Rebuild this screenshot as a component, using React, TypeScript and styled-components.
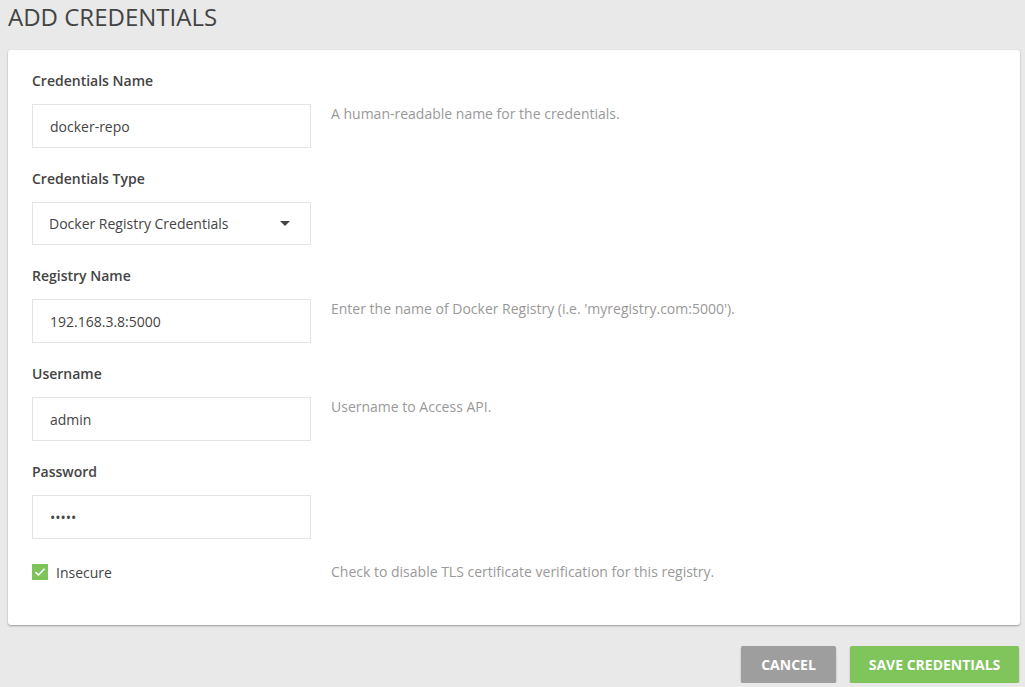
import React from 'react';
import styled, { createGlobalStyle } from 'styled-components';

const GlobalStyle = createGlobalStyle`
    html, body {
        margin: 0;
        padding: 0;
        background: #e9e9e9;
        font-family: "Open Sans", "Noto Sans", Arial, sans-serif;
        color: #444;
    }
    * {
        box-sizing: border-box;
    }
`;

const Page = styled.div`
    padding: 0 5px 0 8px;
`;

const Title = styled.h1`
    margin: 0;
    padding-top: 2px;
    height: 50px;
    font-size: 24px;
    font-weight: 400;
    line-height: 30px;
    text-transform: uppercase;
    color: #444;
`;

const Card = styled.div`
    background: #fff;
    border-radius: 3px;
    box-shadow: 0 1px 2px rgba(0, 0, 0, 0.35);
    padding: 21px 24px 41px 24px;
`;

const Field = styled.div`
    margin-bottom: 21px;
`;

const Label = styled.div`
    font-size: 14px;
    font-weight: 600;
    line-height: 20px;
    margin-bottom: 13px;
    color: #444;
`;

const Row = styled.div`
    display: grid;
    grid-template-columns: 279px 1fr;
    column-gap: 20px;
    align-items: start;
`;

const Input = styled.input`
    width: 279px;
    height: 44px;
    border: 1px solid #e4e4e4;
    border-radius: 0;
    padding: 0 17px;
    font-family: inherit;
    font-size: 14px;
    color: #444;
    background: #fff;
    outline: none;
`;

const SelectBox = styled.div`
    width: 279px;
    height: 43px;
    border: 1px solid #e4e4e4;
    padding: 0 20px 0 16px;
    display: flex;
    align-items: center;
    justify-content: space-between;
    font-size: 14px;
    color: #444;
`;

const Caret = styled.span`
    width: 0;
    height: 0;
    border-left: 5px solid transparent;
    border-right: 5px solid transparent;
    border-top: 5px solid #444;
`;

const Help = styled.div`
    font-size: 14px;
    line-height: 20px;
    color: #999;
`;

const CheckRow = styled.div`
    display: grid;
    grid-template-columns: 279px 1fr;
    column-gap: 20px;
    align-items: center;
    height: 24px;
`;

const CheckLabel = styled.label`
    display: flex;
    align-items: center;
    gap: 8px;
    font-size: 14px;
    color: #444;
`;

const Box = styled.span`
    width: 16px;
    height: 16px;
    background: #7ec35b;
    display: flex;
    align-items: center;
    justify-content: center;
`;

const Actions = styled.div`
    display: flex;
    justify-content: flex-end;
    gap: 14px;
    padding-top: 21px;
    padding-right: 1px;
`;

const Button = styled.button<{ $variant: 'cancel' | 'save' }>`
    height: 37px;
    width: ${p => (p.$variant === 'save' ? '169px' : '95px')};
    padding: 0;
    border: none;
    border-radius: 2px;
    font-family: inherit;
    font-size: 14px;
    font-weight: 700;
    text-transform: uppercase;
    color: #fff;
    background: ${p => (p.$variant === 'save' ? '#80c45c' : '#9e9e9e')};
    box-shadow: 0 1px 2px rgba(0, 0, 0, 0.25);
`;

const fields = [
    { label: 'Credentials Name', value: 'docker-repo', help: 'A human-readable name for the credentials.' },
    { label: 'Credentials Type', select: 'Docker Registry Credentials' },
    { label: 'Registry Name', value: '192.168.3.8:5000', help: "Enter the name of Docker Registry (i.e. 'myregistry.com:5000')." },
    { label: 'Username', value: 'admin', help: 'Username to Access API.' },
    { label: 'Password', value: 'admin', password: true },
];

function App() {
    return (
        <Page>
            <GlobalStyle />
            <Title>Add Credentials</Title>
            <Card>
                {fields.map(f => (
                    <Field key={f.label}>
                        <Label>{f.label}</Label>
                        <Row>
                            {f.select ? (
                                <SelectBox>
                                    {f.select}
                                    <Caret />
                                </SelectBox>
                            ) : (
                                <Input
                                    type={f.password ? 'password' : 'text'}
                                    defaultValue={f.value}
                                    readOnly
                                />
                            )}
                            {f.help && <Help>{f.help}</Help>}
                        </Row>
                    </Field>
                ))}
                <CheckRow>
                    <CheckLabel>
                        <Box>
                            <svg width="12" height="10" viewBox="0 0 12 10">
                                <path d="M1.5 5.2 L4.5 8 L10.5 1.8" fill="none" stroke="#fff" strokeWidth="1.6" />
                            </svg>
                        </Box>
                        Insecure
                    </CheckLabel>
                    <Help>Check to disable TLS certificate verification for this registry.</Help>
                </CheckRow>
            </Card>
            <Actions>
                <Button $variant="cancel">Cancel</Button>
                <Button $variant="save">Save Credentials</Button>
            </Actions>
        </Page>
    );
}

export default App;
